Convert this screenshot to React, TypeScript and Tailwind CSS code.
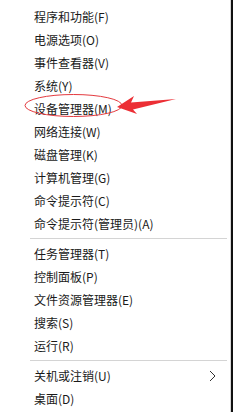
const groups: string[][] = [
  [
    '程序和功能(F)',
    '电源选项(O)',
    '事件查看器(V)',
    '系统(Y)',
    '设备管理器(M)',
    '网络连接(W)',
    '磁盘管理(K)',
    '计算机管理(G)',
    '命令提示符(C)',
    '命令提示符(管理员)(A)',
  ],
  ['任务管理器(T)', '控制面板(P)', '文件资源管理器(E)', '搜索(S)', '运行(R)'],
  ['关机或注销(U)', '桌面(D)'],
];

function Row({ label, sub }: { label: string; sub?: boolean }) {
  return (
    <div className="flex h-[23px] items-center justify-between pl-[34px] pr-[14px]">
      <span className="text-[12px] leading-none text-[#1a1a1a]">{label}</span>
      {sub && (
        <svg width="7" height="12" viewBox="0 0 7 12" className="text-[#333]">
          <path d="M1 1 L6 6 L1 11" fill="none" stroke="currentColor" strokeWidth="1" />
        </svg>
      )}
    </div>
  );
}

export default function App() {
  return (
    <div
      className="relative h-[412px] w-[233px] overflow-hidden bg-white"
      style={{ fontFamily: '"Noto Sans CJK SC", "Noto Sans", sans-serif' }}
    >
      <div className="flex h-full">
        <div className="flex flex-1 flex-col pt-[5px]">
          {groups.map((g, gi) => (
            <div key={gi} className="flex flex-col">
              {gi > 0 && (
                <div className="flex h-[7px] items-center pl-[30px] pr-[3px]">
                  <div className="h-px w-full bg-[#d4d4d4]" />
                </div>
              )}
              {g.map((label) => (
                <Row key={label} label={label} sub={label === '关机或注销(U)'} />
              ))}
            </div>
          ))}
        </div>
        <div className="w-px bg-[#d8d8d8]" />
        <div className="w-[2px] bg-[#111]" />
      </div>

      {/* red annotation */}
      <svg
        className="pointer-events-none absolute left-0 top-0"
        width="233"
        height="412"
        viewBox="0 0 233 412"
      >
        <ellipse cx="73.5" cy="105.5" rx="48.5" ry="11" fill="none" stroke="#e43a3f" strokeWidth="1" />
        <path d="M117 107 L134 96 L131 102.5 L176 99 L133 109.5 L137 114 Z" fill="#ec2f35" />
      </svg>
    </div>
  );
}
